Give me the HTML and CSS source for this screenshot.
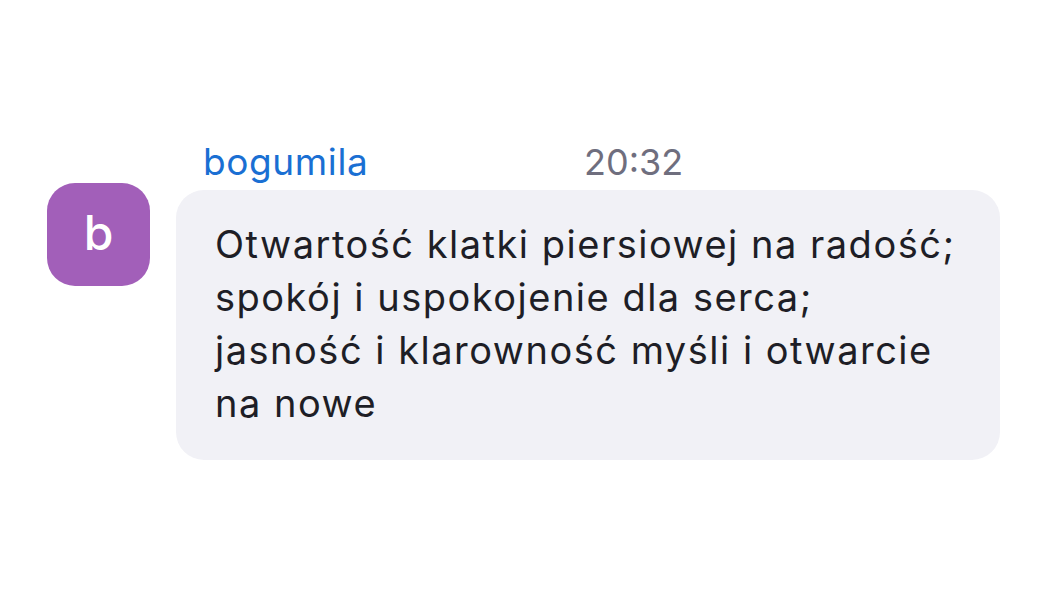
FILE: index.html
```html
<!DOCTYPE html>
<html lang="pl">
<head>
<meta charset="utf-8">
<link rel="stylesheet" href="styles.css">
</head>
<body>
<div class="message">
  <div class="avatar">b</div>
  <div class="content">
    <div class="header">
      <span class="name">bogumila</span>
      <span class="time">20:32</span>
    </div>
    <div class="bubble">
      <p class="text">Otwartość klatki piersiowej na radość;<br>spokój i uspokojenie dla serca;<br>jasność i klarowność myśli i otwarcie<br>na nowe</p>
    </div>
  </div>
</div>
</body>
</html>
```
FILE: styles.css
```css
html, body {
  margin: 0;
  padding: 0;
  background: #ffffff;
  width: 1050px;
  height: 600px;
  overflow: hidden;
}
body {
  font-family: Inter, "Noto Sans", sans-serif;
}
.message {
  display: flex;
  padding: 140px 0 0 47px;
  gap: 26px;
}
.avatar {
  width: 103px;
  height: 103px;
  margin-top: 43px;
  border-radius: 28px;
  background: #a25fb9;
  color: #ffffff;
  font-size: 48px;
  font-weight: 500;
  line-height: 1;
  padding-bottom: 4px;
  box-sizing: border-box;
  display: flex;
  align-items: center;
  justify-content: center;
  flex: none;
}
.content {
  display: flex;
  flex-direction: column;
}
.header {
  display: flex;
  align-items: baseline;
  height: 50px;
  line-height: 44px;
  padding-left: 27px;
  font-size: 37px;
}
.name {
  color: #1a6fd3;
  width: 381px;
  letter-spacing: 0.6px;
}
.time {
  color: #6f6e7e;
  font-size: 36px;
}
.bubble {
  width: 824px;
  height: 270px;
  box-sizing: border-box;
  padding: 28px 0 0 39px;
  background: #f1f1f6;
  border-radius: 28px;
}
.text {
  margin: 0;
  font-size: 38px;
  line-height: 53px;
  letter-spacing: 1.5px;
  color: #1e1e26;
}
```
